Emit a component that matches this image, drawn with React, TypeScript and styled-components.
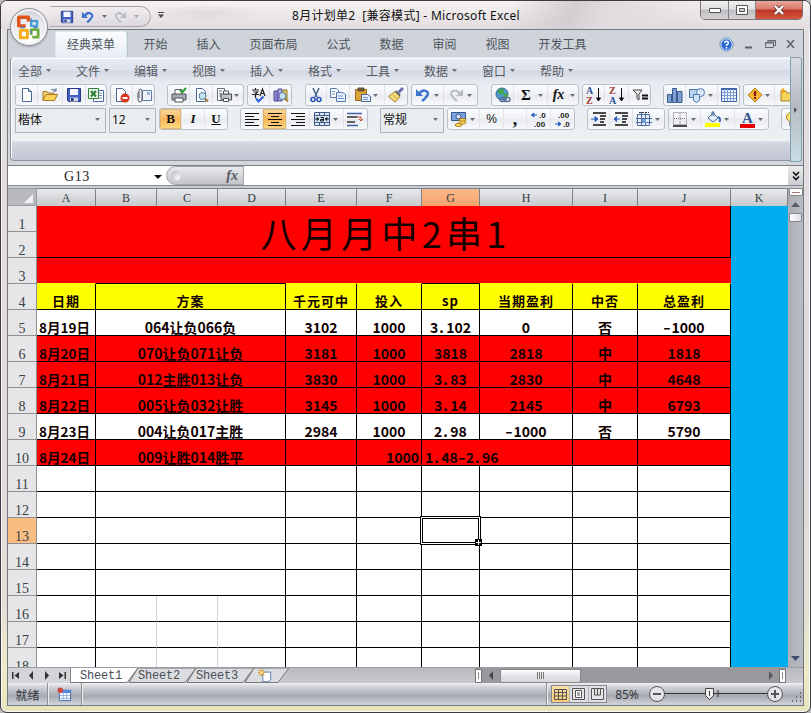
import React from "react";
import styled, { createGlobalStyle, css } from "styled-components";

const Global = createGlobalStyle`
  body { margin: 0; background: #b9b7b8; overflow: hidden; }
  * { box-sizing: border-box; }
`;
const ui = `"Noto Sans CJK SC", sans-serif`;
const mono = `"Liberation Mono", "Noto Sans CJK SC", monospace`;
const serif = `"Liberation Serif", "Noto Sans CJK SC", serif`;

const Window = styled.div`
  position: relative; width: 811px; height: 713px; overflow: hidden;
  display: flex; flex-direction: column;
  border: 1px solid #3b3b40; border-radius: 7px;
  box-shadow: inset 0 0 0 1px #f8f6f6;
  background: linear-gradient(#e5e0e2 0, #e0dadd 60%, #e3dfd6 85%, #efebc8 94%, #e6e4bb 100%);
  font: 12px ${ui};
`;
const TitleBar = styled.div`
  height: 28px; flex: none; display: flex; padding-left: 49px; position: relative;
  background: radial-gradient(ellipse 60px 9px at 205px 12px, #c9c3c666, transparent),
    linear-gradient(115deg, transparent 62%, #d3ced1 70%, #e0dbde 74%, transparent 90%),
    linear-gradient(#f7f3f4, #e2dcdf);
`;
const QuickAccess = styled.div`
  display: flex; align-items: center; width: 101px; height: 21px; margin-top: 5px; padding-left: 9px;
  border: 1px solid #aaa7ac; border-left: none; border-radius: 0 11px 11px 0;
  background: linear-gradient(#f1edef, #dcd9df);
`;
const Slot = styled.span<{ $w: number }>`
  width: ${p => p.$w}px; height: 100%; flex: none; display: flex; align-items: center; justify-content: center;
`;
const Caption = styled.div`
  position: absolute; left: 291px; top: 5px; font: 12px/20px "Noto Sans", ${ui};
  letter-spacing: 0.29px; color: #111; white-space: pre;
`;
const WindowButtons = styled.div`
  position: absolute; right: 7px; top: -1px; display: flex; height: 20px;
  border: 1px solid #77757a; border-radius: 0 0 5px 5px; overflow: hidden;
`;
const WindowButton = styled.div<{ $w: number; $close?: boolean }>`
  width: ${p => p.$w}px; display: flex; align-items: center; justify-content: center;
  border-right: 1px solid #858287;
  background: ${p => (p.$close ? "linear-gradient(#e8a79b 0, #d9786a 45%, #bd3425 50%, #d5583e 100%)" : "linear-gradient(#f1eef0 0, #e2dfe2 45%, #bfbdc1 50%, #d5d3d6 100%)")};
  &:last-child { border-right: none; }
`;
const OfficeButton = styled.div`
  position: absolute; left: 9px; top: 7px; width: 38px; height: 38px; border-radius: 50%;
  border: 1px solid #8d8f95; display: flex; align-items: center; justify-content: center;
  background: radial-gradient(circle at 50% 75%, #fff 15%, #e6e7ea 55%, #bcbec5 100%);
  box-shadow: inset 0 0 0 2px #f4f4f6, 0 1px 2px #7778;
`;
const Body = styled.div`
  height: 677px; flex: none; margin: 0 6px; border: 1px solid #74787f; display: flex; flex-direction: column; background: #c8ccd3;
`;
const TabStrip = styled.div`
  height: 27px; flex: none; display: flex; align-items: flex-end; padding-left: 47px; background: #cfd3da; color: #4c535c;
`;
const Tab = styled.div<{ $active?: boolean }>`
  padding: 0 14.5px; height: 26px; line-height: 25px;
  ${p => p.$active && css`
    width: 72px; padding: 0 0 0 11px; margin-right: 2px; line-height: 23px; background: linear-gradient(#fafcfd, #e7edf4);
    border: 1px solid #dfe9ec; border-bottom: none; border-radius: 3px 3px 0 0; box-shadow: 1px 0 1px #b3c4cc;
  `}
`;
const DocButtons = styled.div`
  margin-left: auto; width: 84px; height: 26px; display: flex; align-items: center; gap: 9px;
`;
const RibbonWrap = styled.div`
  height: 108px; flex: none; display: flex; padding: 0 1px 3px 2px; background: #d3d6db;
`;
const Ribbon = styled.div`
  flex: 1; min-width: 0; height: 104px; overflow: hidden; border: 1px solid #8f959f; border-right: none; border-radius: 4px 0 0 4px;
  border-top-color: #e4e8ec; display: flex; flex-direction: column;
  box-shadow: inset 1px 1px 0 #fff;
  background: linear-gradient(#e9edf5 0, #dce1ec 12px, #d3d8e4 13px, #e5e8ef 23px, #e9ecf2 28px, #edf0f2 83px, #d4d7e1 84px, #c3c6d2 103px);
`;
const RibbonScroll = styled.div`
  width: 12px; height: 105px; display: flex; align-items: center; justify-content: center;
  border: 1px solid #7fa0ae; border-top-color: #97999f; border-radius: 0 3px 3px 0; background: linear-gradient(#d8dbe2, #b6bac2 45%, #c7dde4);
`;
const MenuRow = styled.div`
  display: flex; height: 26px; flex: none; padding: 0 0 0 7px; color: #56595f;
`;
const MenuItem = styled.div`
  width: 58px; height: 25px; display: flex; align-items: center; gap: 4px;
`;
const ToolRow = styled.div`
  display: flex; flex: none; height: 24px; padding-left: 4px;
`;
const Group = styled.div<{ $w: number; $gap?: number }>`
  width: ${p => p.$w}px; margin-left: ${p => p.$gap ?? 0}px; height: 22px; flex: none; overflow: hidden; display: flex;
  border: 1px solid #bcc0c8; border-radius: 3px; background: linear-gradient(#fdfdfe, #eef0f4 50%, #e8ebef 52%, #f8f9fb);
`;
const Tool = styled.div<{ $w: number; $on?: boolean }>`
  width: ${p => p.$w}px; flex: none; display: flex; align-items: center; justify-content: center; gap: 1px;
  border-right: 1px solid #e2e4e9;
  ${p => p.$on && css`background: linear-gradient(#f8d9a3, #f6b65a 50%, #fddc83); box-shadow: inset 0 0 0 1px #e2b56b;`}
  &:last-child { border-right: none; }
`;
const Combo = styled.div<{ $w: number; $gap?: number }>`
  width: ${p => p.$w}px; margin-left: ${p => p.$gap ?? 0}px; height: 25px; flex: none; padding: 0 5px 3px 2px;
  display: flex; align-items: center; justify-content: space-between; border: 1px solid #b2b6bd; background: #eaedef; color: #111;
  font: 12px "Noto Sans", ${ui};
`;
const Letter = styled.span<{ $i?: boolean; $u?: boolean; $size?: number; $c?: string }>`
  font: ${p => (p.$i ? "italic " : "")}bold ${p => p.$size ?? 13}px/14px "Liberation Serif", serif; color: ${p => p.$c ?? "#111"};
  text-decoration: ${p => (p.$u ? "underline" : "none")};
`;
const PercentSign = styled.span`font: 12px/14px "Liberation Sans", sans-serif; color: #111;`;
const FormulaBar = styled.div`
  height: 21px; flex: none; display: flex; background: #fff; border-top: 1px solid #7b7f86; border-bottom: 1px solid #888b92;
`;
const NameBox = styled.div`
  width: 157px; display: flex; align-items: center; padding: 2px 3px 0 56px; justify-content: space-between;
  font: 14px ${serif}; letter-spacing: 0.6px; color: #222;
`;
const FxArea = styled.div`
  width: 78px; display: flex; align-items: center; justify-content: space-between; padding: 0 5px 0 4px; margin-left: 1px;
  background: linear-gradient(#e8e9eb, #c2c4c9); border: 1px solid #a4a6ab; border-radius: 10px 0 0 10px;
`;
const FxKnob = styled.span`
  width: 10px; height: 10px; border-radius: 50%; background: radial-gradient(circle at 70% 70%, #f6f6f6, #b4b6ba);
`;
const Expand = styled.div`
  margin-left: auto; width: 15px; background: linear-gradient(#ebecee, #cbccd0); display: flex; align-items: center; justify-content: center;
`;
const SheetArea = styled.div`
  height: 479px; flex: none; margin-top: 2px; display: flex;
`;
const RowHeads = styled.div`
  width: 29px; flex: none; overflow: hidden; background: #e4e4e6;
`;
const Corner = styled.div`
  height: 18px; border: 1px solid #9a9ca1; border-left: none; background: #b9babf; display: flex; justify-content: flex-end; align-items: flex-end; padding: 2px 3px;
`;
const RowHead = styled.div<{ $on?: boolean }>`
  height: 26px; border-right: 1px solid #8f9093; border-bottom: 1px solid #8f9093; text-align: center;
  font: 14px/14px ${serif}; padding-top: 12px; color: #394145; background: ${p => (p.$on ? "#f7bd83" : "#e6e6e8")};
`;
const Columns = styled.div`
  width: 751px; flex: none; overflow: hidden; display: flex; flex-direction: column;
`;
const tracks = "59px 61px 61px 68px 71px 65px 58px 93px 65px 93px 57px";
const ColHeads = styled.div`
  height: 18px; flex: none; display: grid; grid-template-columns: ${tracks};
`;
const ColHead = styled.div<{ $on?: boolean }>`
  border: 1px solid #7f8186; border-left: none; text-align: center; font: 12px/19px ${serif}; color: #333d42;
  background: ${p => (p.$on ? "linear-gradient(#fbb98b, #f5a06a)" : "linear-gradient(#e9eaec, #c3c5c9)")};
`;
const Cells = styled.div`
  position: relative; height: 461px; overflow: hidden; display: grid; grid-template-columns: ${tracks}; grid-auto-rows: 26px; background: #fff;
`;
type CellProps = { $c: number; $r: number; $span?: number; $rows?: number; $bg?: string; $right?: string; $bottom?: string; $align?: string };
const Cell = styled.div<CellProps>`
  grid-column: ${p => p.$c} / span ${p => p.$span ?? 1}; grid-row: ${p => p.$r} / span ${p => p.$rows ?? 1};
  background: ${p => p.$bg ?? "#fff"}; color: #120000; white-space: nowrap; min-width: 0;
  border-right: 1px solid ${p => p.$right ?? "#000"}; border-bottom: 1px solid ${p => p.$bottom ?? "#000"};
  text-align: ${p => p.$align ?? "center"}; padding: 7px ${p => (p.$align === "right" ? 2 : 0)}px 0 ${p => (p.$align === "left" ? 3 : 0)}px;
  font: bold 14px/20px "Noto Sans CJK SC", sans-serif;
`;
const DateCell = styled(Cell)`font-size: 13.5px; padding-right: 3px;`;
const Heading = styled(Cell)`font: bold 13px/19px "Noto Sans CJK SC", sans-serif; letter-spacing: 1px;`;
const BigTitle = styled(Cell)`
  font: 400 36px/53px "Noto Sans CJK SC", sans-serif; letter-spacing: 4.3px; padding: 0 0 0 4px;
`;
const Dot = styled.span`display: inline-block; width: 8px; text-align: left; text-indent: 1px;`;
const Minus = styled.span`display: inline-block; width: 8px; text-align: center; transform: scaleX(1.5);`;
const Selection = styled.div`
  grid-column: 7; grid-row: 13; position: relative; margin: -2px -1px -1px -2px; border: 1px solid #000;
  box-shadow: inset 0 0 0 1px #fff, inset 0 0 0 2px #000;
  &::after { content: ""; position: absolute; right: -2px; bottom: -2px; width: 5px; height: 5px; border: 1px solid #fff; background:
    linear-gradient(#fff, #fff) 50% 50% / 1px 5px no-repeat, linear-gradient(#fff, #fff) 50% 50% / 5px 1px no-repeat, #000; border-color: #000; }
`;
const VScroll = styled.div`
  width: 15px; flex: none; display: flex; flex-direction: column; align-items: center; background: linear-gradient(90deg, #adafb7, #b9bbc2);
`;
const SplitV = styled.div`width: 14px; height: 8px; background: #fdfdfd; border: 1px solid #888; display: flex; align-items: center; justify-content: center;`;
const Dash = styled.span`width: 8px; height: 1px; background: #a07878;`;
const ScrollBtn = styled.div`width: 15px; height: 17px; display: flex; align-items: center; justify-content: center;`;
const VThumb = styled.div`width: 13px; height: 9px; border: 1px solid #85878c; border-radius: 1px; background: linear-gradient(90deg, #fff, #dcdde0);`;
const Spring = styled.div`flex: 1;`;
const SheetBar = styled.div`
  height: 16px; flex: none; display: flex; background: linear-gradient(#b9babf, #c9cacf); border-top: 1px solid #999ba2;
`;
const NavButtons = styled.div`
  width: 63px; display: flex; align-items: center; justify-content: space-around; background: #d3d4d8; border-right: 1px solid #888;
`;
const SheetTab = styled.div<{ $w: number }>`
  width: ${p => p.$w}px; position: relative; height: 15px; font: 12px/16px ${mono}; letter-spacing: -0.2px; color: #4a4e55;
  padding-left: 9px; display: flex;
`;
const TabShape = styled.svg`position: absolute; left: 0; top: 0;`;
const TabLabel = styled.span`position: relative;`;
const HScroll = styled.div`
  margin-left: auto; width: 311px; display: flex; align-items: center; background: #98999d; margin-right: 17px;
`;
const SplitH = styled.div`width: 7px; height: 14px; background: #fff; border: 1px solid #777; display: flex; justify-content: center; align-items: center;
  &::after { content: ""; width: 1px; height: 7px; background: #888; }`;
const HThumb = styled.div`
  width: 81px; height: 14px; border: 1px solid #85878c; border-radius: 1px; background: linear-gradient(#fff, #e3e4e7 50%, #d5d6da);
  display: flex; justify-content: center; align-items: center; gap: 1px;
`;
const Grip = styled.span`width: 1px; height: 7px; background: #777;`;
const StatusBar = styled.div`
  height: 22px; flex: none; display: flex; align-items: center; font-size: 12px; color: #33373c;
  background: linear-gradient(#f1f1f3 0, #d2d3d8 4px, #b5b7bf 10px, #a7a9b3 13px, #d0d1d6 21px);
`;
const StatusPart = styled.div<{ $w: number }>`
  width: ${p => p.$w}px; height: 22px; display: flex; align-items: center; justify-content: center; border-right: 1px solid #8f9299; box-shadow: 1px 0 0 #eee;
`;
const ViewButtons = styled.div`
  display: flex; width: 56px; height: 18px; border: 1px solid #85888f; background: #dfe0e4;
`;
const ViewButton = styled.div<{ $on?: boolean }>`
  flex: 1; display: flex; align-items: center; justify-content: center; border-right: 1px solid #b1b3b8;
  background: ${p => (p.$on ? "linear-gradient(#fbe0a8, #f8c873)" : "transparent")};
  &:last-child { border-right: none; }
`;
const Percent = styled.span`width: 40px; text-align: center; font: 12px "Noto Sans", sans-serif;`;

/* Icons */
const Arrow = ({ c = "#6b6f76", s = 5 }: { c?: string; s?: number }) => (
  <svg width={s} height={s > 6 ? 4 : 3} viewBox="0 0 6 3" preserveAspectRatio="none"><path d="M0 0h6L3 3z" fill={c} /></svg>
);
const Tri = ({ d, c = "#5b5d66" }: { d: string; c?: string }) => {
  const paths: Record<string, string> = {
    up: "M0 7L4.5 2 9 7z", down: "M0 2h9L4.5 7z", left: "M6 0v9L2 4.5z", right: "M3 0v9l4-4.5z",
    first: "M1 1h1.5v7H1zM8 1v7L3.5 4.5z", last: "M6.5 1H8v7H6.500zM1 1v7l4.500-3.500z",
  };
  return <svg width="9" height="9" viewBox="0 0 9 9"><path d={paths[d]} fill={c} /></svg>;
};
const page = <path d="M3.500 1.500h6l3 3v10h-9z" fill="#fff" stroke="#4a6692" />;
const lens = <><circle cx="9.500" cy="9" r="3.500" fill="#bfe2f4" stroke="#56799c" /><path d="M12 11.500l3 3" stroke="#a87935" strokeWidth="2" /></>;
const arrowTxt = "#2f62c0";
const art: Record<string, React.ReactNode> = {
  new: <>{page}<path d="M9.500 1.500v3h3" fill="#cfdcf0" stroke="#4a6692" /></>,
  open: <><path d="M1 13.500v-9h4l1 1.500h6v2" fill="#f5d36c" stroke="#a9792a" /><path d="M1 13.500l3-6h11.500l-3 6z" fill="#fbd35c" stroke="#a9792a" /><path d="M9 3q3-2 5 1m0-3v3h-3" fill="none" stroke="#4f6f9f" /></>,
  save: <><path d="M1.500 1.500h13v13h-12l-1-1z" fill="#4560c4" stroke="#27357f" /><path d="M4 2h8v6H4z" fill="#f3f6ff" /><path d="M4 10.500h8v4H4z" fill="#cdd5e8" /><path d="M5 11h2.500v3H5z" fill="#27357f" /></>,
  excel: <><path d="M5.500 3.500h10v11h-10z" fill="#fff" stroke="#4a6aa5" /><path d="M11 6h3m-3 2.500h3m-3 2.500h3" stroke="#6f8fc4" /><path d="M.5 1.500h10v10H.5z" fill="#e9f6e6" stroke="#2f8338" /><path d="M3 4l5 5.500m0-5.500L3 9.500" stroke="#2f8338" strokeWidth="2.200" /></>,
  perm: <><path d="M2.500 1.500h6l3 3v10h-9z" fill="#fff" stroke="#4a6692" /><circle cx="11" cy="11" r="4.500" fill="#d9341e" /><path d="M8.500 11h5" stroke="#fff" strokeWidth="2" /></>,
  mail: <><path d="M6.500 3.500h9v10h-9z" fill="#eef3fb" stroke="#607ba4" /><path d="M11 5h3v3h-3z" fill="#9fb2d6" /><path d="M2 5v7q0 3 2 3t2-3V4q0-2-1.500-2T3 4v7" fill="none" stroke="#555d6b" /></>,
  print: <><path d="M4 7V2.500h7V7" fill="#fff" stroke="#566" /><path d="M1 7h14v6H1z" fill="#a4abb5" stroke="#4d535b" /><path d="M4 11h8v4H4z" fill="#fff" stroke="#4d535b" /><path d="M9 3l2 2.500L15 1" fill="none" stroke="#2f9c2f" strokeWidth="2" /></>,
  preview: <>{page}{lens}</>,
  printmenu: <><path d="M1.500 1.500h7v12h-7z" fill="#fff" stroke="#666f7b" /><path d="M3 4h3M3 6.500h2M3 9h2" stroke="#667" /><path d="M5 7h10.500v6H5z" fill="#c0c5cc" stroke="#4d535b" /><path d="M7.500 4h5v3h-5zM7.500 11.500h5v3h-5z" fill="#fff" stroke="#4d535b" /></>,
  spell: <><path d="M1 3h7M4.500 1v2M2.500 5h4L4.500 7v4M1 7.500h7M9 9l2.500-7L14 9M10 6.500h3" fill="none" stroke="#222" strokeWidth="1.200" /><path d="M5 11.500l2.500 3 5-5" fill="none" stroke="#2b63d4" strokeWidth="2" /></>,
  research: <><path d="M1 4h4v10H1z" fill="#8b80cc" stroke="#554b96" /><path d="M5 2h4v12H5z" fill="#b3abe3" stroke="#554b96" /><path d="M10 3h4v9h-4z" fill="#e9ce60" stroke="#8f7c2c" />{lens}</>,
  cut: <><path d="M5 1l4 9M11 1L7 10" stroke="#48618c" strokeWidth="1.500" /><circle cx="5" cy="12.500" r="2" fill="none" stroke="#2b57b5" strokeWidth="1.600" /><circle cx="11" cy="12.500" r="2" fill="none" stroke="#2b57b5" strokeWidth="1.600" /></>,
  copy: <><path d="M.5 1.500h6l2 2v7h-8z" fill="#fff" stroke="#4f78b5" /><path d="M6.500 5.500h6l3 2v7h-9z" fill="#e7f0fc" stroke="#4f78b5" /><path d="M8 9h5m-5 2.500h6M2 4.500h3M2 7h3" stroke="#6f92c6" /></>,
  paste: <><path d="M.5 2.500h11v11H.5z" fill="#dba536" stroke="#956a1c" /><path d="M3 1h6v3H3z" fill="#6b5a3c" stroke="#665533" /><path d="M6.500 7.500h6l3 2v5h-9z" fill="#eaf1fc" stroke="#4a689a" /><path d="M8 10.500h5m-5 2h5" stroke="#7b98c8" /></>,
  brush: <><path d="M15 1l-4.500 4.500" stroke="#6b6fae" strokeWidth="3" /><path d="M7 4.500l5 4.500q-2 4-5 6L.5 9.500z" fill="#f5dc7e" stroke="#aa8325" /><path d="M7.500 4l4.500 4.500" stroke="#666" strokeWidth="2" /><path d="M5 8l4 4" stroke="#c59b35" /></>,
  undo: <><path d="M4 7q3-5 7-3t0 6q-1 2-4 4" fill="none" stroke="#3d74cb" strokeWidth="2.500" /><path d="M1 2v7h7z" fill="#3d74cb" /></>,
  redo: <><path d="M12 7Q9 2 5 4t0 6q1 2 4 4" fill="none" stroke="#b9bdc5" strokeWidth="2" /><path d="M15 2v7H8z" fill="#b9bdc5" /></>,
  globe: <><circle cx="7" cy="7" r="6" fill="#4c9bd5" stroke="#32659a" /><path d="M3 3q4-3 6 0t-5 5zM8 7q5-2 5 1t-3 4z" fill="#45a54a" /><rect x="5" y="10.500" width="6" height="4" rx="2" fill="none" stroke="#587498" strokeWidth="1.500" /><rect x="9" y="10.500" width="6" height="4" rx="2" fill="none" stroke="#587498" strokeWidth="1.500" /></>,
  filter: <><path d="M1 3h9L7 7v6l-2-1.500V7z" fill="#eee" stroke="#444" /><path d="M10 8.500h6m-6 3h6" stroke="#111" strokeWidth="1.800" /></>,
  chart: <><path d="M.5 7.500h4v8h-4zM5.500 1.500h4v14h-4zM10.500 4.500h4.500v11h-4.500z" fill="#7f9fd0" stroke="#3b5a8f" /></>,
  shapes: <><path d="M.5 2.500h9v8h-9z" fill="#b7d1ef" stroke="#4d79ae" /><circle cx="11.500" cy="5.500" r="4" fill="#dceafa" stroke="#4d79ae" /><path d="M4.500 7.500h6v6l-3 2-3-2z" fill="#cfe2f8" stroke="#4d79ae" /></>,
  table: <><path d="M.5 1.500h15v13H.5z" fill="#eef4fd" stroke="#3c65a5" /><path d="M.5 2h15" stroke="#3c65a5" strokeWidth="2" /><path d="M3.500 2v12m3-12v12m3-12v12m3-12v12M1 5.500h14m-14 3h14m-14 3h14" stroke="#7a9ed3" /></>,
  warn: <><path d="M8 1l7 7-7 7-7-7z" fill="#f8b933" stroke="#b57d1d" /><path d="M8 4v5" stroke="#8e1a10" strokeWidth="2.400" /><circle cx="8" cy="11" r="1.200" fill="#8e1a10" /></>,
  folder: <><path d="M1 14V4h5l1 2h9v8z" fill="#f6d35b" stroke="#a9812c" /><path d="M3 1v5M.5 3.500h5" stroke="#f3a020" strokeWidth="1.400" /></>,
  left: <path d="M1 2.500h14M1 5.500h9M1 8.500h14M1 11.500h9M1 14.500h14" stroke="#111" />,
  center: <path d="M1 2.500h14M4 5.500h8M1 8.500h14M4 11.500h8M1 14.500h14" stroke="#111" />,
  right: <path d="M1 2.500h14M6 5.500h9M1 8.500h14M6 11.500h9M1 14.500h14" stroke="#111" />,
  merge: <><path d="M.5 1.500h15v13H.5zM.5 4.500h15m-15 7h15M5.500 1.500v3m5-3v3m-5 7v3m5-3v3" fill="#dbe7f8" stroke="#425b86" /><path d="M1 8h3m8 0h3M3 6.500L5 8 3 9.500zM13 6.500L11 8l2 1.500z" stroke="#234" fill="#234" /><path d="M6.500 6.500h3v3.500h-3V8.500h3" fill="none" stroke="#111" /></>,
  wrap: <><path d="M0 2.500h15M0 14.500h11" stroke="#3f62a4" strokeWidth="1.500" /><path d="M0 6h10M0 11h8" stroke="#333" strokeWidth="1.500" /><path d="M10 6h4v4m-2-2l2 2 2-2" fill="none" stroke="#c24a31" /></>,
  money: <><path d="M.5 1.500h14v8H.5z" fill="#7ba2df" stroke="#315591" /><circle cx="7.500" cy="5.500" r="2.500" fill="#dbe8fb" stroke="#315591" /><ellipse cx="11.500" cy="9" rx="3.500" ry="1.500" fill="#ffe066" stroke="#a97b17" /><ellipse cx="11.500" cy="11.500" rx="3.500" ry="1.500" fill="#ffe066" stroke="#a97b17" /><ellipse cx="7.500" cy="14" rx="3.500" ry="1.500" fill="#ffe066" stroke="#a97b17" /></>,
  indentOut: <><path d="M2 2h13M9 5h6M9 8h5M9 11h4M2 14h13" stroke="#111" strokeWidth="1.500" /><path d="M0 8h6M4 5.500L7 8l-3 2.500z" stroke={arrowTxt} fill={arrowTxt} /></>,
  indentIn: <><path d="M2 2h13M9 5h6M9 8h5M9 11h4M2 14h13" stroke="#111" strokeWidth="1.500" /><path d="M2 8h5M3.500 5.500L1 8l2.500 2.500z" stroke={arrowTxt} fill={arrowTxt} /></>,
  sheetgrid: <><path d="M1.500 3.500h12v11h-12z" fill="#e7f0fc" stroke="#4d6e9e" /><path d="M5.500 1v14m4-14v14M0 7.500h16m-16 4h16" stroke="#4d6e9e" /><path d="M6 8h4v4H6z" fill="#6f9cdb" /><path d="M3 1.500h10" stroke="#333" strokeDasharray="2 1" /></>,
  border: <><path d="M1.500 1.500h13v12h-13zM8 2v12M2 7.500h12" fill="none" stroke="#777" strokeDasharray="1 1" /><path d="M1 15h14" stroke="#111" strokeWidth="1.500" /></>,
  fill: <><path d="M3 7l5-5 5 5-5 4z" fill="#e3eefb" stroke="#4a6892" /><path d="M7 5V1h2v4" fill="none" stroke="#4a6892" /><path d="M13 6q3 1 1.500 5" stroke="#3867b4" strokeWidth="2" fill="none" /><path d="M0 12h15v4H0z" fill="#ff0" /></>,
  bulb: <><circle cx="8" cy="6" r="4.500" fill="#fce273" stroke="#a78527" /><path d="M6 11h4v4H6z" fill="#8d98ac" /></>,
  calendar: <><path d="M2.500 3.500h12v11h-12z" fill="#fff" stroke="#4067ac" /><path d="M3 5h12" stroke="#4d87dc" strokeWidth="3" /><path d="M6.500 6v8m4-8v8M3 9h11m-11 3h11" stroke="#8aade1" /><circle cx="3.500" cy="3.500" r="3" fill="#cf4741" /></>,
  help: <><circle cx="8" cy="8" r="7" fill="#dce9fc" stroke="#608bc7" /><circle cx="8" cy="8" r="5.500" fill="#2867d2" /><path d="M6 6.500Q6 4.500 8 4.500t2 2Q10 8 8 8.500v1" fill="none" stroke="#fff" strokeWidth="1.500" /><circle cx="8" cy="11.500" r="1" fill="#fff" /></>,
  star: <><path d="M5.500 3.500h9v9l-3 2h-6z" fill="#fff" stroke="#4f74ad" /><path d="M4 0v8M0 4h8M1 1l6 6m0-6L1 7" stroke="#e49a25" strokeWidth="1.200" /><circle cx="4" cy="4" r="1.500" fill="#fff3b0" /></>,
};
const Icon = ({ n, s = 16 }: { n: string; s?: number }) => <svg width={s} height={s} viewBox="0 0 16 16" fill="none">{art[n]}</svg>;

const SvgText = styled.text<{ $serif?: boolean }>`font-family: ${p => (p.$serif ? '"Liberation Serif"' : '"Liberation Sans"')}; font-weight: bold;`;
const Sort = ({ a, b, ca, cb }: { a: string; b: string; ca: string; cb: string }) => (
  <svg width="16" height="20" viewBox="0 0 16 20"><SvgText $serif x="0" y="8.500" fontSize="10" fill={ca}>{a}</SvgText><SvgText $serif x="0" y="18.500" fontSize="10" fill={cb}>{b}</SvgText><path d="M12.500 3v12M10.500 13h4l-2 3z" stroke="#111" fill="#111" /></svg>
);
const Decimal = ({ more }: { more?: boolean }) => (
  <svg width="18" height="18" viewBox="0 0 18 18"><SvgText x={more ? 9 : 4} y="8" fontSize="8" fill="#222">{more ? ".0" : ".00"}</SvgText><SvgText x={more ? 4 : 9} y="17" fontSize="8" fill="#222">{more ? ".00" : ".0"}</SvgText>
    <path d={more ? "M1 5h6M4 3L1.500 5l2.500 2z" : "M1 14h6M4.500 12l2.500 2-2.500 2z"} stroke={arrowTxt} fill={arrowTxt} /></svg>
);
const FontColor = () => <svg width="17" height="17" viewBox="0 0 17 17"><SvgText $serif x="3" y="12" fontSize="15" fill="#34558f">A</SvgText><path d="M1 13h15v4H1z" fill="#e80000" /></svg>;
const Logo = () => (
  <svg width="26" height="27" viewBox="0 0 24 25" fill="none" strokeWidth="3.200" strokeLinejoin="round">
    <path d="M9 11H2.500V3h9V7" stroke="#e0561b" /><path d="M14 6.500h5.500v4.500h-5.500z" stroke="#4c9ed3" strokeWidth="2.300" />
    <path d="M10.500 15H4v7h6.500z" stroke="#f5ad1e" strokeWidth="2.800" /><path d="M14 14.500h6.500v7H14z" stroke="#6fae3e" strokeWidth="2.600" strokeDasharray="19 3" />
    <path d="M14 4v3m0 8v3M4 12.500h4m8 0h4" stroke="#557fc2" strokeWidth="1.200" />
  </svg>
);

const T = ({ w, n, arrow, on, children }: { w: number; n?: string; arrow?: boolean; on?: boolean; children?: React.ReactNode }) => (
  <Tool $w={w} $on={on}>{n ? <Icon n={n} /> : children}{arrow && <Slot $w={8}><Arrow /></Slot>}</Tool>
);

const menus = ["全部", "文件", "编辑", "视图", "插入", "格式", "工具", "数据", "窗口", "帮助"];
const tabs = ["经典菜单", "开始", "插入", "页面布局", "公式", "数据", "审阅", "视图", "开发工具"];
const heads = ["日期", "方案", "千元可中", "投入", "sp", "当期盈利", "中否", "总盈利"];
const starts = [1, 2, 5, 6, 7, 8, 9, 10];
const records: { red: boolean; v: string[] }[] = [
  { red: false, v: ["8月19日", "064让负066负", "3102", "1000", "3.102", "0", "否", "-1000"] },
  { red: true, v: ["8月20日", "070让负071让负", "3181", "1000", "3818", "2818", "中", "1818"] },
  { red: true, v: ["8月21日", "012主胜013让负", "3830", "1000", "3.83", "2830", "中", "4648"] },
  { red: true, v: ["8月22日", "005让负032让胜", "3145", "1000", "3.14", "2145", "中", "6793"] },
  { red: false, v: ["8月23日", "004让负017主胜", "2984", "1000", "2.98", "-1000", "否", "5790"] },
  { red: true, v: ["8月24日", "009让胜014胜平", "", "1000", "1.48-2.96", "", "", ""] },
];
const RED = "#ff0000", YELLOW = "#ffff00";
const spaced = (s: string) => s.split(/([.-])/).map((t, i) => (t === "." ? <Dot key={i}>.</Dot> : t === "-" ? <Minus key={i}>-</Minus> : t));

function Grid() {
  return (
    <Cells>
      <BigTitle $c={1} $r={1} $span={10} $rows={2} $bg={RED}>八月月中2串1</BigTitle>
      {starts.map((c, i) => (
        <Cell key={c} $c={c} $r={3} $span={c === 2 ? 3 : 1} $bg={RED} $right={RED} $bottom={i === 1 || i === 4 ? "#000" : YELLOW} />
      ))}
      {heads.map((h, i) => (
        <Heading key={h} $c={starts[i]} $r={4} $span={i === 1 ? 3 : 1} $bg={YELLOW}>{h}</Heading>
      ))}
      {records.map((rec, k) => rec.v.map((v, i) => {
        const last = k === records.length - 1;
        if (last && i === 5) return null;
        const Kind = i === 0 ? DateCell : Cell;
        return (
          <Kind key={k + "-" + i} $c={starts[i]} $r={5 + k} $span={i === 1 ? 3 : last && i === 4 ? 2 : 1} $bg={rec.red ? RED : "#fff"}
            $align={last && i === 3 ? "right" : last && i === 4 ? "left" : "center"}>{spaced(v)}</Kind>
        );
      }))}
      {[11, 12, 13, 14, 15].map(r => starts.map((c, i) => <Cell key={r + "-" + c} $c={c} $r={r} $span={i === 1 ? 3 : 1} />))}
      {[16, 17, 18].map(r => [1, 2, 3, 4, 5, 6, 7, 8, 9, 10].map(c => <Cell key={r + "-" + c} $c={c} $r={r} $right={c === 2 || c === 3 ? "#d0d3da" : "#000"} />))}
      <Cell $c={11} $r={1} $rows={18} $bg="#00aeef" $right="#00aeef" />
      <Selection />
    </Cells>
  );
}

export default function App() {
  return (
    <>
      <Global />
      <Window>
        <TitleBar>
          <QuickAccess>
            <Slot $w={16}><Icon n="save" s={14} /></Slot><Slot $w={26}><Icon n="undo" s={14} /></Slot><Slot $w={6}><Arrow /></Slot>
            <Slot $w={26}><Icon n="redo" s={14} /></Slot><Slot $w={6}><Arrow c="#aaa" /></Slot>
          </QuickAccess>
          <Slot $w={20}><svg width="6" height="6" viewBox="0 0 6 6"><path d="M0 .5h6" stroke="#444" /><path d="M0 2.500h6L3 6z" fill="#444" /></svg></Slot>
          <Caption>{"8月计划单2  [兼容模式] - Microsoft Excel"}</Caption>
          <WindowButtons>
            <WindowButton $w={28}><svg width="12" height="5"><path d="M.5.5h11v4H.5z" fill="#fff" stroke="#555" /></svg></WindowButton>
            <WindowButton $w={27}><svg width="12" height="10"><path d="M.5.500h11v9H.5z" fill="#fff" stroke="#555" /><path d="M3.500 3.500h5v3h-5z" fill="#ccc" stroke="#555" /></svg></WindowButton>
            <WindowButton $w={46} $close><svg width="12" height="10" viewBox="0 0 12 10"><path d="M2 1l8 8M10 1L2 9" stroke="#6a3732" strokeWidth="4" /><path d="M2 1l8 8M10 1L2 9" stroke="#fff" strokeWidth="2.400" /></svg></WindowButton>
          </WindowButtons>
        </TitleBar>
        <Body>
          <TabStrip>
            {tabs.map((t, i) => <Tab key={t} $active={i === 0}>{t}</Tab>)}
            <DocButtons>
              <Icon n="help" s={15} />
              <svg width="12" height="9"><path d="M2 7.500h7" stroke="#59616b" strokeWidth="2" /></svg>
              <svg width="13" height="10"><path d="M3.500 1.500h8v5h-2M1.500 3.500h8v5h-8zM3 2h9M1 4h9" fill="none" stroke="#626973" /></svg>
              <svg width="10" height="10"><path d="M1 1l7 8M8 1L1 9" stroke="#626973" strokeWidth="1.700" /></svg>
            </DocButtons>
          </TabStrip>
          <RibbonWrap>
            <Ribbon>
              <MenuRow>{menus.map(m => <MenuItem key={m}>{m}<Arrow /></MenuItem>)}</MenuRow>
              <ToolRow>
                <Group $w={92}><T w={22} n="new" /><T w={25} n="open" /><T w={23} n="save" /><T w={20} n="excel" /></Group>
                <Group $w={45} $gap={3}><T w={22} n="perm" /><T w={21} n="mail" /></Group>
                <Group $w={77} $gap={12}><T w={22} n="print" /><T w={23} n="preview" /><T w={30} n="printmenu" arrow /></Group>
                <Group $w={45} $gap={3}><T w={22} n="spell" /><T w={21} n="research" /></Group>
                <Group $w={103} $gap={13}><T w={21} n="cut" /><T w={23} n="copy" /><T w={35} n="paste" arrow /><T w={22} n="brush" /></Group>
                <Group $w={67} $gap={3}><T w={32} n="undo" arrow /><T w={33} n="redo" arrow /></Group>
                <Group $w={88} $gap={13}><T w={22} n="globe" /><T w={34} arrow><Slot $w={18}><Letter $size={15}>Σ</Letter></Slot></T><T w={30} arrow><Slot $w={18}><Letter $i $size={14}>fx</Letter></Slot></T></Group>
                <Group $w={69} $gap={3}><T w={22}><Sort a="A" b="Z" ca="#2c4f9b" cb="#a13731" /></T><T w={24}><Sort a="Z" b="A" ca="#a13731" cb="#2c4f9b" /></T><T w={21} n="filter" /></Group>
                <Group $w={77} $gap={12}><T w={22} n="chart" /><T w={32} n="shapes" arrow /><T w={21} n="table" /></Group>
                <Group $w={60} $gap={3}><T w={31} n="warn" arrow /><T w={25} n="folder" /></Group>
              </ToolRow>
              <ToolRow>
                <Combo $w={91}>楷体<Arrow /></Combo>
                <Combo $w={47} $gap={3}>12<Arrow /></Combo>
                <Group $w={69} $gap={3}><T w={22} on><Letter>B</Letter></T><T w={23}><Letter $i>I</Letter></T><T w={22}><Letter $u>U</Letter></T></Group>
                <Group $w={128} $gap={12}><T w={22} n="left" /><T w={24} n="center" on /><T w={23} n="right" /><T w={34} n="merge" arrow /><T w={22} n="wrap" /></Group>
                <Combo $w={64} $gap={12}>常规<Arrow /></Combo>
                <Group $w={128} $gap={3}><T w={32} n="money" arrow /><T w={24}><PercentSign>%</PercentSign></T><T w={23}><Letter $size={18}>,</Letter></T><T w={24}><Decimal more /></T><T w={23}><Decimal /></T></Group>
                <Group $w={78} $gap={12}><T w={22} n="indentOut" /><T w={23} n="indentIn" /><T w={31} n="sheetgrid" arrow /></Group>
                <Group $w={101} $gap={3}><T w={32} n="border" arrow /><T w={34} n="fill" arrow /><T w={33} arrow><FontColor /></T></Group>
                <Group $w={40} $gap={12}><T w={17} n="bulb" /></Group>
              </ToolRow>
            </Ribbon>
            <RibbonScroll><svg width="4" height="6"><path d="M0 0v6l3-3z" fill="#4b5260" /></svg></RibbonScroll>
          </RibbonWrap>
          <FormulaBar>
            <NameBox>G13<Arrow c="#111" s={8} /></NameBox>
            <FxArea><FxKnob /><Letter $i $size={14} $c="#55585e">fx</Letter></FxArea>
            <Expand><svg width="8" height="10"><path d="M1 1l3 3 3-3M1 5.500l3 3 3-3" fill="none" stroke="#111" strokeWidth="1.600" /></svg></Expand>
          </FormulaBar>
          <SheetArea>
            <RowHeads>
              <Corner><svg width="9" height="9"><path d="M9 0v9H0z" fill="#f1f1f3" /></svg></Corner>
              {Array.from({ length: 18 }, (_, i) => <RowHead key={i} $on={i === 12}>{i + 1}</RowHead>)}
            </RowHeads>
            <Columns>
              <ColHeads>{"ABCDEFGHIJK".split("").map(c => <ColHead key={c} $on={c === "G"}>{c}</ColHead>)}</ColHeads>
              <Grid />
            </Columns>
            <VScroll>
              <SplitV><Dash /></SplitV><ScrollBtn><Tri d="up" /></ScrollBtn><VThumb /><Spring /><ScrollBtn><Tri d="down" c="#424b70" /></ScrollBtn>
            </VScroll>
          </SheetArea>
          <SheetBar>
            <NavButtons><Tri d="first" c="#333" /><Tri d="left" c="#333" /><Tri d="right" c="#333" /><Tri d="last" c="#333" /></NavButtons>
            <SheetTab $w={58}><TabShape width="68" height="15"><path d="M0 0h67L56 14.500H0z" fill="#fff" /><path d="M67 0L56 14.500H0" fill="none" stroke="#777" /></TabShape><TabLabel>Sheet1</TabLabel></SheetTab>
            {["Sheet2", "Sheet3"].map(s => (
              <SheetTab key={s} $w={58}><TabShape width="70" height="15"><path d="M9 0h58L56 14.500H0z" fill="#dcdde1" stroke="#777" /></TabShape><TabLabel>{s}</TabLabel></SheetTab>
            ))}
            <SheetTab $w={48}><TabShape width="46" height="15"><path d="M9 0h35L33 14.500H0z" fill="#dcdde1" stroke="#777" /></TabShape><TabLabel><Slot $w={22}><Icon n="star" s={14} /></Slot></TabLabel></SheetTab>
            <HScroll><SplitH /><Slot $w={18}><Tri d="left" c="#45474c" /></Slot><HThumb><Grip /><Grip /><Grip /><Grip /></HThumb><Spring /><Slot $w={17}><Tri d="right" c="#55575c" /></Slot><SplitH /></HScroll>
          </SheetBar>
          <StatusBar>
            <StatusPart $w={40}>就绪</StatusPart>
            <StatusPart $w={34}><Icon n="calendar" s={15} /></StatusPart>
            <Spring />
            <StatusPart $w={4} />
            <Slot $w={4} />
            <ViewButtons>
              <ViewButton $on><svg width="13" height="11"><path d="M.5.500h12v10H.5zM4.500 0v11m4-11v11M0 3.500h13m-13 3.500h13" fill="none" stroke="#555" /></svg></ViewButton>
              <ViewButton><svg width="13" height="12"><path d="M.5.500h12v11H.5z" fill="#e6e6e9" stroke="#555" /><path d="M3.500 2.500h6v7h-6zM5 5h3M5 7h3" fill="#fff" stroke="#555" /></svg></ViewButton>
              <ViewButton><svg width="13" height="12"><path d="M.5.500h12v11H.5zM3.500 0v7h6V0M6.500 0v7" fill="#e6e6e9" stroke="#555" /></svg></ViewButton>
            </ViewButtons>
            <Percent>85%</Percent>
            <svg width="156" height="22">
              <path d="M17 10.500h103M71 7v7" stroke="#333" />
              <circle cx="10" cy="11" r="7.500" fill="#e4e5e8" stroke="#555" /><path d="M6 11h8" stroke="#555" strokeWidth="2" />
              <circle cx="128" cy="11" r="7.500" fill="#e4e5e8" stroke="#555" /><path d="M124 11h8M128 7v8" stroke="#555" strokeWidth="2" />
              <path d="M58.500 5.500h8v7l-4 4-4-4z" fill="#eee" stroke="#444" /><path d="M62.500 8v5" stroke="#444" />
              <path d="M153 10h1M149 14h1m3 0h1M145 18h1m3 0h1m3 0h1" stroke="#66696f" strokeWidth="2" />
            </svg>
          </StatusBar>
        </Body>
        <OfficeButton><Logo /></OfficeButton>
      </Window>
    </>
  );
}
